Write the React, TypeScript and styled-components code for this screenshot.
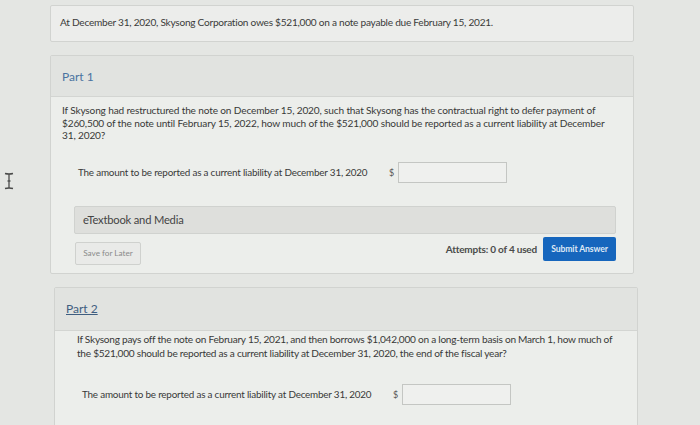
import React from "react";
import styled, { createGlobalStyle } from "styled-components";

const GlobalStyle = createGlobalStyle`
  html, body {
    margin: 0;
    padding: 0;
    background: #e4e6e3;
    font-family: Lato, "Open Sans", sans-serif;
    color: #3a3b3a;
  }
  #root {
    width: 700px;
    height: 425px;
    overflow: hidden;
  }
`;

const App = () => {
  return (
    <>
      <GlobalStyle />
      <Page>
        <Gutter>
          <CursorIcon />
        </Gutter>
        <Column>
          <IntroCard>
            At December 31, 2020, Skysong Corporation owes $521,000 on a note payable due February 15, 2021.
          </IntroCard>

          <PartCard>
            <PartHeader>
              <PartTitle>Part 1</PartTitle>
            </PartHeader>
            <PartBody $top={7} $bottom={8} $indent={11}>
              <Question>
                If Skysong had restructured the note on December 15, 2020, such that Skysong has the contractual right to defer payment of
                <br />
                $260,500 of the note until February 15, 2022, how much of the $521,000 should be reported as a current liability at December
                <br />
                31, 2020?
              </Question>
              <AmountRow $gap={20} $indent={16}>
                <AmountLabel>The amount to be reported as a current liability at December 31, 2020</AmountLabel>
                <Dollar>$</Dollar>
                <AmountInput />
              </AmountRow>
              <MediaBar>eTextbook and Media</MediaBar>
              <Footer>
                <SaveButton>Save for Later</SaveButton>
                <Attempts>Attempts: 0 of 4 used</Attempts>
                <SubmitButton>Submit Answer</SubmitButton>
              </Footer>
            </PartBody>
          </PartCard>

          <PartCard $shift={4}>
            <PartHeader $tall>
              <PartTitle $link>Part 2</PartTitle>
            </PartHeader>
            <PartBody $top={1} $bottom={40} $indent={22}>
              <Question $spacing={14} $tight>
                If Skysong pays off the note on February 15, 2021, and then borrows $1,042,000 on a long-term basis on March 1, how much of
                <br />
                the $521,000 should be reported as a current liability at December 31, 2020, the end of the fiscal year?
              </Question>
              <AmountRow $gap={24} $indent={5}>
                <AmountLabel>The amount to be reported as a current liability at December 31, 2020</AmountLabel>
                <Dollar>$</Dollar>
                <AmountInput />
              </AmountRow>
            </PartBody>
          </PartCard>
        </Column>
      </Page>
    </>
  );
};

const CursorIcon = () => (
  <svg width="12" height="18" viewBox="0 0 12 18" fill="none" stroke="#4a4b4a" strokeWidth="1.3">
    <path d="M2 1.5 Q6 2.5 10 1.5" />
    <path d="M6 2 V16" />
    <path d="M2 16.5 Q6 15.5 10 16.5" />
    <path d="M4.5 9 H7.5" />
  </svg>
);

export default App;

const Page = styled.div`
  display: flex;
  align-items: flex-start;
  width: 700px;
  height: 425px;
  overflow: hidden;
`;

const Gutter = styled.div`
  width: 50px;
  flex-shrink: 0;
  padding: 172px 0 0 3px;
  box-sizing: border-box;
`;

const Column = styled.div`
  width: 584px;
  display: flex;
  flex-direction: column;
  gap: 13px;
  padding-top: 5px;
`;

const IntroCard = styled.div`
  flex-shrink: 0;
  height: 37px;
  box-sizing: border-box;
  border: 1px solid #d1d3d0;
  border-radius: 2px;
  background: #ecedeb;
  padding: 10px 0 0 9px;
  font-size: 10.1px;
  letter-spacing: -0.25px;
  white-space: nowrap;
`;

const PartCard = styled.div<{ $shift?: number }>`
  flex-shrink: 0;
  border: 1px solid #d1d3d0;
  border-radius: 2px;
  background: #eceeeb;
  margin-left: ${(p) => p.$shift ?? 0}px;
  margin-right: ${(p) => -(p.$shift ?? 0)}px;
`;

const PartHeader = styled.div<{ $tall?: boolean }>`
  height: ${(p) => (p.$tall ? 42 : 40)}px;
  background: #e1e3e0;
  border-bottom: 1px solid #d3d5d2;
  display: flex;
  align-items: center;
  padding-left: 11px;
`;

const PartTitle = styled.span<{ $link?: boolean }>`
  font-size: 12px;
  color: ${(p) => (p.$link ? "#3f5e80" : "#4a73a0")};
  text-decoration: ${(p) => (p.$link ? "underline" : "none")};
`;

const PartBody = styled.div<{ $top: number; $bottom: number; $indent: number }>`
  padding: ${(p) => p.$top}px 17px ${(p) => p.$bottom}px ${(p) => p.$indent}px;
  display: flex;
  flex-direction: column;
`;

const Question = styled.p<{ $spacing?: number; $tight?: boolean }>`
  margin: 0;
  font-size: 10.1px;
  line-height: ${(p) => p.$spacing ?? 12.5}px;
  letter-spacing: ${(p) => (p.$tight ? -0.25 : -0.15)}px;
  color: #383938;
  white-space: nowrap;
`;

const AmountRow = styled.div<{ $gap: number; $indent: number }>`
  display: flex;
  align-items: center;
  margin-top: ${(p) => p.$gap}px;
  padding-left: ${(p) => p.$indent}px;
`;

const AmountLabel = styled.span`
  font-size: 9.9px;
  letter-spacing: -0.2px;
  color: #383938;
  width: 311px;
  white-space: nowrap;
`;

const Dollar = styled.span`
  font-size: 9px;
  color: #555;
  width: 9px;
`;

const AmountInput = styled.div`
  width: 107px;
  height: 19px;
  border: 1px solid #c4c6c3;
  background: #eff0ee;
`;

const MediaBar = styled.div`
  margin: 23px 0 0 12px;
  height: 28px;
  box-sizing: border-box;
  border: 1px solid #d0d2cf;
  border-radius: 2px;
  background: #dedfdc;
  display: flex;
  align-items: center;
  padding-left: 8px;
  font-size: 11.2px;
  letter-spacing: -0.2px;
  color: #444;
`;

const Footer = styled.div`
  display: flex;
  align-items: flex-start;
  margin: 3px 0 0 13px;
`;

const SaveButton = styled.div`
  width: 66px;
  height: 23px;
  box-sizing: border-box;
  margin-top: 5px;
  border: 1px solid #cfd1ce;
  border-radius: 2px;
  background: #e9eae8;
  display: flex;
  align-items: center;
  justify-content: center;
  font-size: 8.2px;
  color: #8a8b8a;
`;

const Attempts = styled.span`
  margin: 6px 6px 0 auto;
  font-size: 10px;
  font-weight: 700;
  letter-spacing: -0.2px;
  color: #4a4b4a;
`;

const SubmitButton = styled.div`
  width: 73px;
  height: 24px;
  box-sizing: border-box;
  border-radius: 2px;
  background: #1666bd;
  color: #dfe9f5;
  display: flex;
  align-items: center;
  justify-content: center;
  font-size: 8.6px;
  font-weight: 700;
  letter-spacing: -0.1px;
`;
